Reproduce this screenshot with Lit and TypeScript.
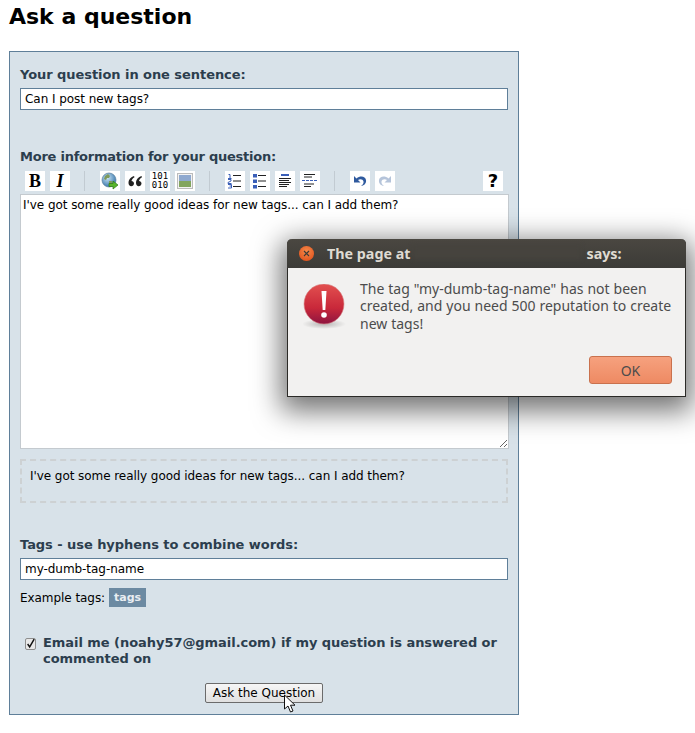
import { LitElement, html, css, svg } from "lit";
import { customElement } from "lit/decorators.js";

const ic = (content: unknown) => html`<svg viewBox="0 0 20 20" width="20" height="20">${content}</svg>`;

const lines = svg`<g fill="#222"><rect x="8" y="4" width="8" height="1"/><rect x="8" y="9.500" width="8" height="1"/><rect x="8" y="15" width="8" height="1"/></g>`;

const icons = {
  link: ic(svg`<defs><radialGradient id="gl" cx=".4" cy=".35" r=".7"><stop offset="0" stop-color="#c8e4f4"/><stop offset="1" stop-color="#2f6fa8"/></radialGradient></defs>
    <circle cx="9" cy="9" r="7" fill="url(#gl)" stroke="#5a7f9c" stroke-width=".7"/>
    <path d="M5 5l3-2 2 2-1 2-2 0-1 2-2-1zM9 10l3 0 1 3-3 3-1-2z" fill="#7f9a5c"/>
    <path d="M9 12.500h4V10l5 4-5 4v-2.500H9z" fill="#59b52c" stroke="#2f7a15" stroke-width=".7"/>`),
  quote: ic(svg`<path d="M9 5C6 6 3.500 8.500 3.500 12c0 2 1.200 3.200 2.700 3.200S9 14 9 12.500 7.800 10 6.500 10C6.800 8.500 7.800 7 9.500 6.200zM16.500 5c-3 1-5.500 3.500-5.500 7 0 2 1.200 3.200 2.700 3.200s2.800-1.200 2.800-2.700-1.200-2.500-2.500-2.500c.3-1.500 1.300-3 3-3.800z" fill="#222"/>`),
  img: ic(svg`<rect x="2.500" y="2.500" width="15" height="15" fill="#f3f3f3" stroke="#bbb"/>
    <rect x="4" y="4" width="12" height="6" fill="#8fa9cf"/><rect x="4" y="10" width="12" height="6" fill="#82a55e"/>`),
  ol: ic(svg`<g fill="none" stroke="#3a5fb8" stroke-width="1">
      <path d="M3.500 3.500h1.500v4M3 7.500h3.500"/>
      <path d="M3 8.500h3v1.500l-3 1.500v1h3.500"/>
      <path d="M3 13.500h3.500v1.500H4.500M6.500 15v2H3"/></g>${lines}`),
  ul: ic(svg`<g fill="#3a5fb8"><rect x="3" y="3" width="4" height="3.500"/><rect x="3" y="8.500" width="4" height="3.500"/><rect x="3" y="14" width="4" height="3.500"/></g>${lines}`),
  heading: ic(svg`<rect x="6" y="3" width="8" height="2" fill="#3a5fb8"/>
    <g fill="#222"><rect x="4" y="7" width="12" height="1"/><rect x="4" y="9" width="10" height="1"/><rect x="4" y="11" width="12" height="1"/><rect x="4" y="13" width="10" height="1"/><rect x="4" y="15" width="8" height="1"/></g>`),
  hr: ic(svg`<g fill="#222"><rect x="4" y="3" width="11" height="1"/><rect x="4" y="5.500" width="8" height="1"/><rect x="4" y="12.500" width="10" height="1"/><rect x="4" y="15" width="7" height="1"/></g>
    <path d="M2 9.500h15" stroke="#3a5fb8" stroke-dasharray="3 1" fill="none"/>`),
  undo: ic(svg`<path d="M4 5v6.500h6.500L8 9c2-1.500 5-1 5.500 1.500.3 1.700-.7 3.300-2.500 4.500 3.500-.5 5.500-3 5-6C15.500 5.500 10.500 4 6.500 7.500z" fill="#2f5a9e"/>`),
  redo: ic(svg`<path d="M16 5v6.500H9.500L12 9c-2-1.500-5-1-5.500 1.500C6.200 12.200 7.200 13.800 9 15c-3.500-.5-5.500-3-5-6C4.500 5.500 9.500 4 13.500 7.500z" fill="#b5c4da"/>`),
};

@customElement("app-root")
export class AppRoot extends LitElement {
  static styles = css`
    :host { display: block; position: relative; width: 695px; height: 733px; overflow: hidden; background: #fff; font-family: "DejaVu Sans", sans-serif; color: #000; }
    h1 { margin: 0; padding: 3px 0 0 9px; height: 51px; box-sizing: border-box; font-size: 22px; line-height: 28px; font-weight: 700; }
    .panel { box-sizing: border-box; width: 510px; height: 664px; margin-left: 9px; padding: 14px 10px 0; border: 1px solid #5f7f99; background: #d8e2e9; }
    label.l { display: block; font-size: 13px; line-height: 18px; height: 16px; font-weight: 700; color: #2c3e4e; white-space: nowrap; letter-spacing: -0.06px; }
    input.t { display: block; box-sizing: border-box; width: 488px; height: 22px; margin: 6px 0 0; padding: 0 4px; border: 1px solid #5f7f99; background: #fff; font: 12px "DejaVu Sans", sans-serif; color: #000; outline: none; letter-spacing: -0.05px; }
    label.l2 { margin-top: 38px; letter-spacing: -0.24px; }
    .bar { display: flex; height: 20px; margin: 7px 0 0 5px; align-items: center; }
    .b { width: 20px; height: 20px; background: #fff; margin-right: 5px; flex: none; display: flex; align-items: center; justify-content: center; }
    .sep { width: 1px; height: 20px; background: #c2cbd2; margin: 0 15px 0 9px; flex: none; }
    .bold { font: 700 18px/20px "Liberation Serif", serif; }
    .ital { font: italic 700 18px/20px "Liberation Serif", serif; }
    .bits { font: 9px/9px "DejaVu Sans Mono", monospace; text-align: center; }
    .q { font: 700 18px/20px "DejaVu Sans", sans-serif; margin-left: auto; margin-right: 5px; }
    textarea { display: block; box-sizing: border-box; width: 489px; height: 255px; margin: 3px 0 0; padding: 3px 2px 2px; border: 1px solid #c4cacf; background: #fff; font: 12px/15px "DejaVu Sans", sans-serif; color: #000; outline: none; letter-spacing: -0.05px; }
    .prev { box-sizing: border-box; width: 488px; height: 44px; margin-top: 10px; padding: 7px 8px; border: 2px dashed #cdd1d3; font-size: 12px; line-height: 16px; letter-spacing: -0.06px; }
    label.l3 { margin-top: 33px; }
    .ex { display: flex; align-items: center; height: 19px; margin-top: 8px; font-size: 12px; gap: 4px; letter-spacing: -0.06px; }
    .tag { display: block; height: 19px; line-height: 19px; padding: 0 5px; background: #6c8aa2; color: #e9eef2; font-size: 11px; font-weight: 700; }
    .chk { display: flex; gap: 7px; margin: 28px 0 0 5px; font-size: 13px; line-height: 16px; font-weight: 700; color: #2c3e4e; letter-spacing: -0.05px; }
    .box { flex: none; box-sizing: border-box; width: 11px; height: 12px; margin-top: 3px; border: 1px solid #8e8e8e; border-radius: 2px; background: #e8e8e8; display: block; overflow: visible; }
    .sub { display: flex; justify-content: center; margin-top: 16px; }
    button.go { box-sizing: border-box; width: 118px; height: 20px; padding: 0; border: 1px solid #6b6b6b; border-radius: 2px; background: linear-gradient(#f6f6f6, #e0e0e0); font: 12px "DejaVu Sans", sans-serif; color: #000; }
    .cursor { position: absolute; left: 283px; top: 694px; width: 14px; height: 20px; }
    .dlg { position: absolute; left: 287px; top: 239px; box-sizing: border-box; width: 399px; height: 158px; background: #f2f1f0; border: 1px solid #2b2a27; border-top: 0; border-radius: 5px 5px 0 0; box-shadow: 0 8px 28px 6px rgba(0,0,0,.55); font-family: "Noto Sans", sans-serif; display: flex; flex-direction: column; }
    .tb { position: relative; height: 29px; flex: none; margin: 0 -1px; background: linear-gradient(#4a4741, #3c3b37); border-radius: 5px 5px 0 0; display: flex; align-items: center; padding-left: 12px; color: #dfdbd2; font-size: 14.300px; font-weight: 700; }
    .x { width: 15px; height: 15px; border-radius: 50%; background: radial-gradient(circle at 50% 35%, #f58a4a, #dd4814); display: flex; align-items: center; justify-content: center; flex: none; margin-right: 13px; }
    .tt { white-space: pre; }
    .says { margin-left: 176px; white-space: pre; }
    .smudge { position: absolute; left: 126px; top: 6px; width: 168px; height: 14px; background: #46433e; filter: blur(2px); }
    .bd { display: flex; flex: 1; padding: 12px 10px 0 15px; }
    .ico { flex: none; width: 44px; height: 46px; margin: 4px 13px 0 0; display: block; }
    .msg { margin: 0; font-size: 14px; line-height: 17.300px; color: #4c4c4c; width: 320px; word-spacing: 0.3px; }
    .ft { display: flex; justify-content: flex-end; padding: 0 13px 12px 0; }
    button.ok { box-sizing: border-box; width: 83px; height: 28px; border: 1px solid #c9714d; border-radius: 3px; background: linear-gradient(#f6a17e, #ee8a63); color: #4c4c4c; font: 14px "Noto Sans", sans-serif; padding: 0; }
  `;

  render() {
    const b = (c: unknown) => html`<span class="b">${c}</span>`;
    return html`
      <h1>Ask a question</h1>
      <div class="panel">
        <label class="l">Your question in one sentence:</label>
        <input class="t" .value=${"Can I post new tags?"} />
        <label class="l l2">More information for your question:</label>
        <div class="bar">
          ${b(html`<span class="bold">B</span>`)}${b(html`<span class="ital">I</span>`)}<span class="sep"></span>
          ${b(icons.link)}${b(icons.quote)}${b(html`<span class="bits">101<br />010</span>`)}${b(icons.img)}<span class="sep"></span>
          ${b(icons.ol)}${b(icons.ul)}${b(icons.heading)}${b(icons.hr)}<span class="sep"></span>
          ${b(icons.undo)}${b(icons.redo)}
          <span class="b q">?</span>
        </div>
        <textarea .value=${"I've got some really good ideas for new tags... can I add them?"}></textarea>
        <div class="prev">I've got some really good ideas for new tags... can I add them?</div>
        <label class="l l3">Tags - use hyphens to combine words:</label>
        <input class="t" .value=${"my-dumb-tag-name"} />
        <div class="ex">Example tags: <span class="tag">tags</span></div>
        <div class="chk">
          <svg class="box" viewBox="0 0 11 12"><path d="M2 6l2.500 3.500L10 0" fill="none" stroke="#111" stroke-width="1.800"/></svg>
          <span>Email me (noahy57@gmail.com) if my question is answered or commented on</span>
        </div>
        <div class="sub"><button class="go">Ask the Question</button></div>
      </div>

      <div class="dlg">
        <div class="tb">
          <span class="x"><svg width="7" height="7" viewBox="0 0 7 7"><path d="M1 1l5 5M6 1l-5 5" stroke="#3c3b37" stroke-width="1.100"/></svg></span>
          <span class="tt">The page at</span><span class="smudge"></span><span class="says">says:</span>
        </div>
        <div class="bd">
          <svg class="ico" viewBox="0 0 44 46">
            <defs>
              <linearGradient id="rd" x1="0" y1="0" x2="0" y2="1"><stop offset="0" stop-color="#e2504f"/><stop offset=".6" stop-color="#c9283a"/><stop offset="1" stop-color="#8e1440"/></linearGradient>
              <radialGradient id="sh"><stop offset="0" stop-color="#000" stop-opacity=".25"/><stop offset="1" stop-color="#000" stop-opacity="0"/></radialGradient>
            </defs>
            <ellipse cx="21" cy="40" rx="22" ry="5" fill="url(#sh)"/>
            <circle cx="21" cy="20" r="20" fill="url(#rd)" stroke="#d98a8a" stroke-width=".6"/>
            <path d="M18.500 7h5l-1.200 19h-2.600z" fill="#fff"/>
            <circle cx="21" cy="31" r="2.800" fill="#fff"/>
          </svg>
          <p class="msg">The tag "my-dumb-tag-name" has not been created, and you need 500 reputation to create new tags!</p>
        </div>
        <div class="ft"><button class="ok">OK</button></div>
      </div>

      <svg class="cursor" viewBox="0 0 14 20"><path d="M1.500 1v14l3.500-3 2.500 6 2.500-1-2.500-5.800h4.500z" fill="#fff" stroke="#111" stroke-width="1"/></svg>
    `;
  }
}
